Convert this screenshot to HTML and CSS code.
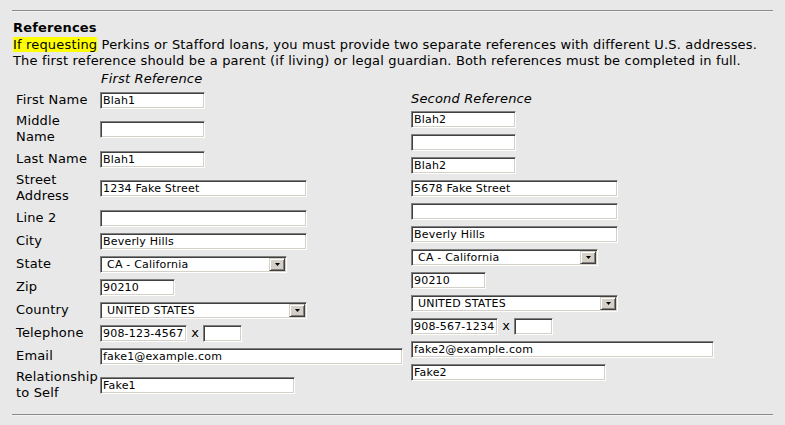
FILE: index.html
```html
<!DOCTYPE html>
<html>
<head>
<meta charset="utf-8">
<title>References</title>
<link rel="stylesheet" href="styles.css">
</head>
<body>
<div class="page">
  <hr class="rule">
  <h2 class="title">References</h2>
  <p class="intro"><mark class="hl">If requesting</mark> Perkins or Stafford loans, you must provide two separate references with different U.S. addresses.<br>The first reference should be a parent (if living) or legal guardian. Both references must be completed in full.</p>

  <div class="refs">
    <div class="ref-first">
      <div class="grid">
        <div></div><div class="ref-head head-first">First Reference</div>

        <label class="lbl">First Name</label>
        <div class="cell"><input class="inp w-s" type="text" value="Blah1"></div>

        <label class="lbl lbl-2">Middle<br>Name</label>
        <div class="cell"><input class="inp w-s" type="text" value=""></div>

        <label class="lbl">Last Name</label>
        <div class="cell"><input class="inp w-s" type="text" value="Blah1"></div>

        <label class="lbl lbl-2">Street<br>Address</label>
        <div class="cell"><input class="inp w-m" type="text" value="1234 Fake Street"></div>

        <label class="lbl">Line 2</label>
        <div class="cell"><input class="inp w-m" type="text" value=""></div>

        <label class="lbl">City</label>
        <div class="cell"><input class="inp w-m" type="text" value="Beverly Hills"></div>

        <label class="lbl">State</label>
        <div class="cell"><span class="sel w-state"><select class="sel-box"><option>CA - California</option></select><span class="sel-btn"><svg width="5" height="3" viewBox="0 0 5 3"><polygon points="0,0 5,0 2.5,3" fill="#000"/></svg></span></span></div>

        <label class="lbl">Zip</label>
        <div class="cell"><input class="inp w-zip" type="text" value="90210"></div>

        <label class="lbl">Country</label>
        <div class="cell"><span class="sel w-m"><select class="sel-box"><option>UNITED STATES</option></select><span class="sel-btn"><svg width="5" height="3" viewBox="0 0 5 3"><polygon points="0,0 5,0 2.5,3" fill="#000"/></svg></span></span></div>

        <label class="lbl">Telephone</label>
        <div class="cell"><input class="inp w-phone" type="text" value="908-123-4567"> x <input class="inp w-ext" type="text" value=""></div>

        <label class="lbl">Email</label>
        <div class="cell"><input class="inp w-l" type="text" value="fake1@example.com"></div>

        <label class="lbl lbl-2">Relationship<br>to Self</label>
        <div class="cell"><input class="inp w-rel" type="text" value="Fake1"></div>
      </div>
    </div>

    <div class="ref-second">
      <div class="ref-head">Second Reference</div>
      <div class="stack">
        <div class="cell"><input class="inp w-s" type="text" value="Blah2"></div>
        <div class="cell"><input class="inp w-s" type="text" value=""></div>
        <div class="cell"><input class="inp w-s" type="text" value="Blah2"></div>
        <div class="cell"><input class="inp w-m" type="text" value="5678 Fake Street"></div>
        <div class="cell"><input class="inp w-m" type="text" value=""></div>
        <div class="cell"><input class="inp w-m" type="text" value="Beverly Hills"></div>
        <div class="cell"><span class="sel w-state"><select class="sel-box"><option>CA - California</option></select><span class="sel-btn"><svg width="5" height="3" viewBox="0 0 5 3"><polygon points="0,0 5,0 2.5,3" fill="#000"/></svg></span></span></div>
        <div class="cell"><input class="inp w-zip" type="text" value="90210"></div>
        <div class="cell"><span class="sel w-m"><select class="sel-box"><option>UNITED STATES</option></select><span class="sel-btn"><svg width="5" height="3" viewBox="0 0 5 3"><polygon points="0,0 5,0 2.5,3" fill="#000"/></svg></span></span></div>
        <div class="cell"><input class="inp w-phone" type="text" value="908-567-1234"> x <input class="inp w-ext" type="text" value=""></div>
        <div class="cell"><input class="inp w-l" type="text" value="fake2@example.com"></div>
        <div class="cell"><input class="inp w-rel" type="text" value="Fake2"></div>
      </div>
    </div>
  </div>

  <hr class="rule rule-bottom">
</div>
</body>
</html>
```

FILE: styles.css
```css
html, body {
  margin: 0;
  padding: 0;
  background: #e8e8e8;
}

body {
  font-family: "DejaVu Sans", Verdana, sans-serif;
  font-size: 13px;
  line-height: 16px;
  letter-spacing: 0.17px;
  color: #000;
}

.page {
  padding: 10px 12px 0 12px;
}

.rule {
  margin: 0;
  height: 0;
  border: 0;
  border-top: 1px solid #8a8a8a;
  border-bottom: 1px solid #f2f2f2;
}

.rule-bottom {
  margin-top: 12px;
}

.title {
  margin: 7px 0 0 1px;
  font-size: 13px;
  line-height: 17px;
  font-weight: bold;
}

.intro {
  margin: 0 0 0 1px;
  padding-top: 1px;
}

.hl {
  background: #ffff00;
  color: #000;
}

.refs {
  display: flex;
  align-items: center;
  margin-top: 2px;
}

.ref-first {
  width: 395px;
  padding-left: 4px;
}

.grid {
  display: grid;
  grid-template-columns: 84px auto;
  row-gap: 3px;
}

.ref-head {
  font-style: italic;
  line-height: 16px;
}

.head-first {
  padding-left: 1px;
  line-height: 16px;
}

.lbl {
  align-self: center;
  line-height: 16px;
}

.lbl-2 {
  padding-bottom: 1px;
}

.cell {
  min-height: 20px;
  display: flex;
  align-items: center;
  white-space: pre;
}

.stack {
  display: flex;
  flex-direction: column;
  gap: 3px;
  margin-top: 2px;
}

.inp {
  box-sizing: border-box;
  height: 17px;
  margin: 0;
  padding: 0 2px;
  font-family: "DejaVu Sans", Verdana, sans-serif;
  font-size: 11px;
  line-height: 13px;
  letter-spacing: 0.2px;
  color: #000;
  background: #fff;
  border: 1px solid;
  border-color: #808080 #ffffff #ffffff #808080;
  box-shadow: inset 1px 1px 0 #404040, inset -1px -1px 0 #d4d0c8;
  outline: none;
}

.w-s { width: 105px; }
.w-m { width: 207px; }
.w-l { width: 303px; }
.w-zip { width: 75px; }
.w-phone { width: 87px; }
.w-ext { width: 39px; }
.w-rel { width: 195px; }
.w-state { width: 187px; }

.sel {
  position: relative;
  display: inline-block;
  height: 17px;
}

.sel-box {
  -webkit-appearance: none;
  appearance: none;
  box-sizing: border-box;
  width: 100%;
  height: 17px;
  margin: 0;
  padding: 0 0 0 6px;
  font-family: "DejaVu Sans", Verdana, sans-serif;
  font-size: 11px;
  line-height: 13px;
  letter-spacing: 0.2px;
  color: #000;
  background: #fff;
  border: 1px solid;
  border-color: #808080 #ffffff #ffffff #808080;
  box-shadow: inset 1px 1px 0 #404040, inset -1px -1px 0 #d4d0c8;
  border-radius: 0;
  outline: none;
}

.sel-btn {
  position: absolute;
  top: 2px;
  right: 2px;
  width: 16px;
  height: 13px;
  box-sizing: border-box;
  background: #d4d0c8;
  border: 1px solid;
  border-color: #d4d0c8 #404040 #404040 #d4d0c8;
  box-shadow: inset 1px 1px 0 #ffffff, inset -1px -1px 0 #808080;
  display: flex;
  align-items: center;
  justify-content: center;
}

.sel-btn svg {
  display: block;
}
```
